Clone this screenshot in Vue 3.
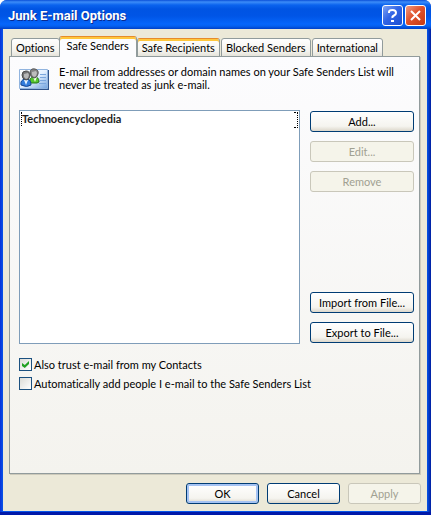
<script setup>
import { ref } from "vue";

const tabs = ref([
  { id: "options", label: "Options" },
  { id: "senders", label: "Safe Senders" },
  { id: "recipients", label: "Safe Recipients", hot: true },
  { id: "blocked", label: "Blocked Senders" },
  { id: "international", label: "International" },
]);
const activeTab = ref("senders");
const senders = ref(["Technoencyclopedia"]);
const trustContacts = ref(true);
const autoAdd = ref(false);
</script>

<template>
  <main class="window">
    <header class="title-bar">
      <h1>Junk E-mail Options</h1>
      <button class="caption-btn" aria-label="Help">
        <svg viewBox="0 0 19 19" aria-hidden="true">
          <path d="M6 7V6Q6 4 9.500 4T13 7Q13 8.500 11 9.500T9.500 12" fill="none" stroke="#fff" stroke-width="2" />
          <path d="M8 14h3v2H8z" fill="#fff" />
        </svg>
      </button>
      <button class="caption-btn close" aria-label="Close">
        <svg viewBox="0 0 19 19" aria-hidden="true">
          <path d="M5 5l9 9M14 5l-9 9" stroke="#fff" stroke-width="2" />
        </svg>
      </button>
    </header>

    <div class="body">
      <div class="tabs" role="tablist">
        <button
          v-for="tab in tabs"
          :id="`tab-${tab.id}`"
          :key="tab.id"
          class="tab"
          :class="{ active: tab.id === activeTab, hot: tab.hot }"
          role="tab"
          :aria-selected="tab.id === activeTab"
          @click="activeTab = tab.id"
        >
          {{ tab.label }}
        </button>
      </div>

      <section class="panel" role="tabpanel" :aria-labelledby="`tab-${activeTab}`">
        <div class="intro">
          <svg class="card-icon" viewBox="0 0 31 24" aria-hidden="true">
            <defs>
              <linearGradient id="card" x1="0" y1="0" x2="1" y2="1">
                <stop offset="0" stop-color="#fff" />
                <stop offset="0.5" stop-color="#e4f0ff" />
                <stop offset="1" stop-color="#72a3e0" />
              </linearGradient>
            </defs>
            <path d="M1 2h29v20H1z" fill="#31548c" />
            <path d="M0.500 1.500h28v19h-28z" fill="url(#card)" stroke="#91b4df" />
            <path d="M21 6.500h6M21 9.500h6M21 12.500h6M20 15.500h7" stroke="#7ba6dd" />
            <path d="M11 14q-1-4 3-5 6-1 6 5l-2 1h-6z" fill="#55c62d" stroke="#22761b" />
            <path d="M14 9l2 5 2-5z" fill="#efffe0" />
            <path d="M11 4q1-4 5-3 4 1 3 5-1 4-4 4-4-1-4-6z" fill="#858585" stroke="#555" />
            <path d="M13 4l4-1 1 2-1 3-2 1-2-2z" fill="#bdbdbd" />
            <path d="M2 17q-1-5 4-6 6-1 6 6-4 3-10 0z" fill="#327cdc" stroke="#174793" />
            <path d="M5 12l2 5 2-5z" fill="#e6f4ff" />
            <path d="M3 7q0-4 4-4 4 0 4 5-1 4-4 4-4-1-4-5z" fill="#777" stroke="#4c4c4c" />
            <path d="M5 6l4-1 1 2-1 3-2 1-2-2z" fill="#b8b8b8" />
          </svg>
          <p>
            E-mail from addresses or domain names on your Safe Senders List will
            never be treated as junk e-mail.
          </p>
        </div>

        <div class="list-area">
          <ul class="sender-list" role="listbox" aria-label="Safe Senders" tabindex="0">
            <li v-for="sender in senders" :key="sender" role="option" aria-selected="false">
              {{ sender }}
            </li>
          </ul>
          <div class="actions">
            <button class="btn">Add...</button>
            <button class="btn" disabled>Edit...</button>
            <button class="btn" disabled>Remove</button>
            <button class="btn import">Import from File...</button>
            <button class="btn">Export to File...</button>
          </div>
        </div>

        <div class="checks">
          <label><input v-model="trustContacts" type="checkbox" />Also trust e-mail from my Contacts</label>
          <label><input v-model="autoAdd" type="checkbox" />Automatically add people I e-mail to the Safe Senders List</label>
        </div>
      </section>

      <footer class="footer">
        <button class="btn default">OK</button>
        <button class="btn">Cancel</button>
        <button class="btn" disabled>Apply</button>
      </footer>
    </div>
  </main>
</template>

<style>
body {
  background: #fff;
}
</style>

<style scoped>
* {
  box-sizing: border-box;
}

.window {
  display: flex;
  flex-direction: column;
  min-height: 100vh;
  padding: 0 4px 4px 3px;
  border-radius: 7px 7px 0 0;
  background: linear-gradient(90deg, #0831d9 0, #0855e8 3px, #0855e8 calc(100% - 4px), #001ea0 100%);
  box-shadow: inset 0 -3px #0019a8;
  color: #000;
  font-family: Lato, "Noto Sans", sans-serif;
  font-size: 11px;
  font-variant-ligatures: none;
  line-height: 13px;
}

button {
  font: inherit;
  font-variant-ligatures: none;
  color: inherit;
}

.title-bar {
  display: flex;
  align-items: center;
  gap: 2px;
  height: 29px;
  margin: 0 -4px 0 -3px;
  padding: 2px 5px 0 8px;
  border-radius: 7px 7px 0 0;
  background: linear-gradient(#0a4fd8 0, #3c8cf8 2px, #0a63ee 5px, #0054e3 9px, #0055e6 16px, #0666fb 24px, #0561f0 26px, #0040c8 29px);
}

h1 {
  flex: 1;
  margin: 0;
  color: #fff;
  font-family: Roboto, sans-serif;
  font-size: 13px;
  font-weight: 700;
  line-height: 18px;
  text-shadow: 1px 1px #0a2a90;
}

.caption-btn {
  width: 21px;
  height: 21px;
  padding: 0;
  border: 1px solid #fff;
  border-radius: 3px;
  background: linear-gradient(135deg, #7fa4f5, #3265e5 45%, #1b4fd2);
}

.caption-btn.close {
  background: linear-gradient(135deg, #f09a80, #e0532d 45%, #c63a12);
}

.caption-btn svg {
  display: block;
  width: 19px;
  height: 19px;
}

.body {
  display: flex;
  flex: 1;
  flex-direction: column;
  padding: 7px 7px 7px 6px;
  background: #ece9d8;
}

.tabs {
  display: flex;
  align-items: flex-end;
  height: 21px;
  margin-bottom: -1px;
  padding-left: 2px;
}

.tab {
  height: 19px;
  margin-right: 1px;
  padding: 0 4px;
  border: 1px solid #919b9c;
  border-radius: 3px 3px 0 0;
  background: linear-gradient(#fff, #f4f3ee 70%, #e5e3da);
  white-space: nowrap;
}

.tab.hot {
  border-top: 1px solid #e68b2c;
  box-shadow: inset 0 2px #ffc73c;
}

.tab.active {
  z-index: 1;
  height: 21px;
  margin: 0 0 0 -2px;
  padding: 0 7px 3px;
  border-top-color: #e68b2c;
  border-bottom: 0;
  background: #fcfcfe;
  box-shadow: inset 0 2px #ffc73c;
}

.panel {
  flex: 1;
  padding: 8px 5px 0 9px;
  border: 1px solid #919b9c;
  background: linear-gradient(#fcfcfe, #f4f3ee);
  box-shadow: 1px 1px #cdcabb;
}

.intro {
  display: flex;
  gap: 9px;
  min-height: 45px;
}

.card-icon {
  flex: none;
  width: 31px;
  height: 24px;
  margin-top: 3px;
}

.intro p {
  margin: 0;
}

.list-area {
  display: flex;
  gap: 10px;
}

.sender-list {
  flex: 1;
  min-height: 234px;
  margin: 0;
  padding: 1px;
  border: 1px solid #7f9db9;
  background: #fff;
  list-style: none;
}

/* only the ends of the focus rectangle show */
.sender-list li {
  display: flex;
  justify-content: space-between;
  height: 14px;
  border-left: 1px dotted #000;
  color: #222;
  font-weight: 700;
}

.sender-list li::after {
  width: 3px;
  height: 14px;
  border: 1px dotted #000;
  border-left: 0;
  content: "";
}

.actions {
  display: flex;
  flex-direction: column;
  gap: 9px;
  width: 104px;
  padding: 1px 0;
}

.btn {
  height: 21px;
  padding: 0 4px;
  border: 1px solid #003c74;
  border-radius: 3px;
  background: linear-gradient(#fff, #f5f4ef 75%, #dcd7cb);
  white-space: nowrap;
}

.btn.default {
  box-shadow: inset 0 0 0 2px #a5c3f3;
}

.btn:disabled {
  border-color: #c9c7ba;
  background: #f5f4ea;
  color: #a1a192;
}

.import {
  margin-top: auto;
}

.checks {
  display: flex;
  flex-direction: column;
  gap: 6px;
  margin-top: 14px;
}

label {
  display: flex;
  gap: 2px;
}

input {
  flex: none;
  width: 13px;
  height: 13px;
  margin: 0;
  border: 1px solid #1c5180;
  background: linear-gradient(135deg, #dcdcd7, #fff);
  appearance: none;
}

input:checked {
  display: grid;
  place-items: center;
}

input:checked::before {
  width: 7px;
  height: 7px;
  background: #21a121;
  clip-path: polygon(0 28%, 40% 58%, 100% 0, 100% 42%, 40% 100%, 0 70%);
  content: "";
}

.footer {
  display: flex;
  justify-content: flex-end;
  gap: 8px;
  margin: 9px -1px 0 0;
}

.footer .btn {
  width: 73px;
}
</style>
